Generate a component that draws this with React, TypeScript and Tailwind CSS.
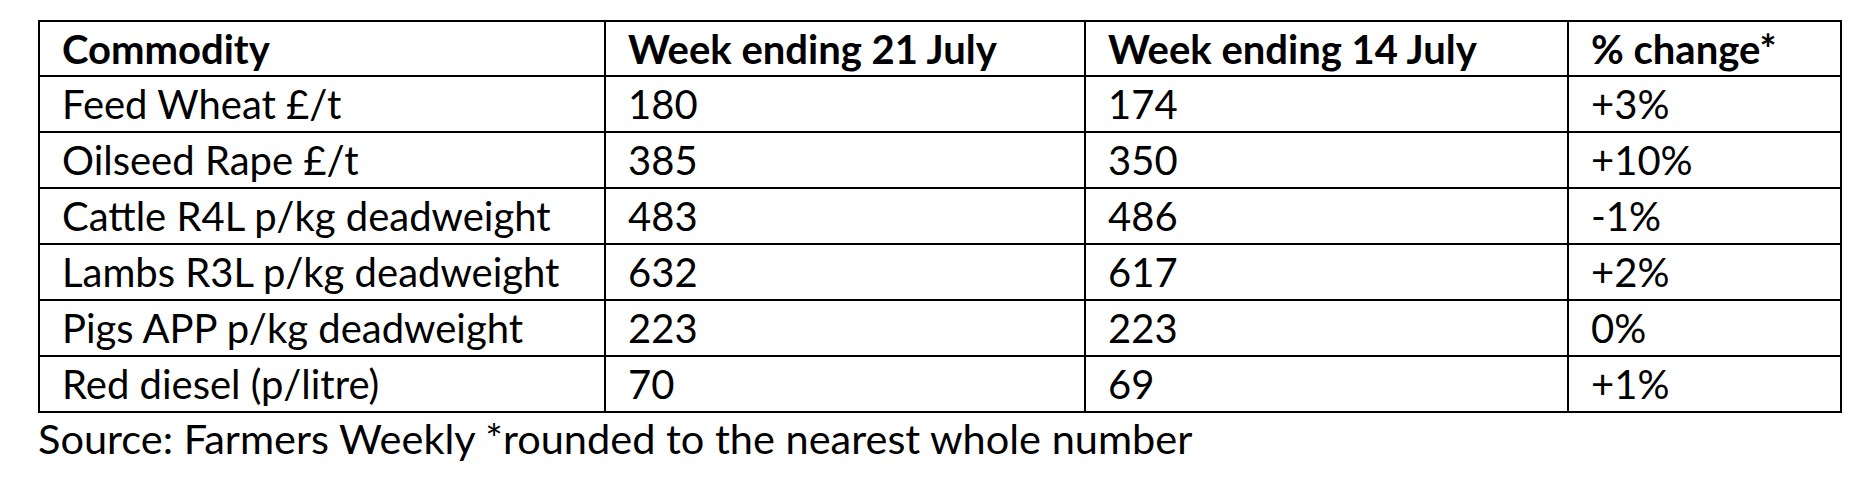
const rows = [
  ['Feed Wheat £/t', '180', '174', '+3%'],
  ['Oilseed Rape £/t', '385', '350', '+10%'],
  ['Cattle R4L p/kg deadweight', '483', '486', '-1%'],
  ['Lambs R3L p/kg deadweight', '632', '617', '+2%'],
  ['Pigs APP p/kg deadweight', '223', '223', '0%'],
  ['Red diesel (p/litre)', '70', '69', '+1%'],
]

const headers = ['Commodity', 'Week ending 21 July', 'Week ending 14 July', '% change*']

export default function App() {
  return (
    <div className="w-[1869px] h-[492px] bg-white pl-[38px] pt-[20px] text-black font-['Lato',sans-serif]">
      <table className="w-[1802px] border-collapse table-fixed text-[40px] leading-none">
        <colgroup>
          <col className="w-[566px]" />
          <col className="w-[480px]" />
          <col className="w-[483px]" />
          <col className="w-[273px]" />
        </colgroup>
        <thead>
          <tr className="h-[55px]">
            {headers.map(h => (
              <th key={h} className="border-2 border-black text-left font-bold pl-[22px] align-middle">
                {h}
              </th>
            ))}
          </tr>
        </thead>
        <tbody>
          {rows.map(r => (
            <tr key={r[0]} className="h-[56px]">
              {r.map((c, i) => (
                <td key={i} className="border-2 border-black pl-[22px] align-middle">
                  {c}
                </td>
              ))}
            </tr>
          ))}
        </tbody>
      </table>
      <div className="text-[41.5px] leading-none mt-[5px]">
        Source: Farmers Weekly *rounded to the nearest whole number
      </div>
    </div>
  )
}
